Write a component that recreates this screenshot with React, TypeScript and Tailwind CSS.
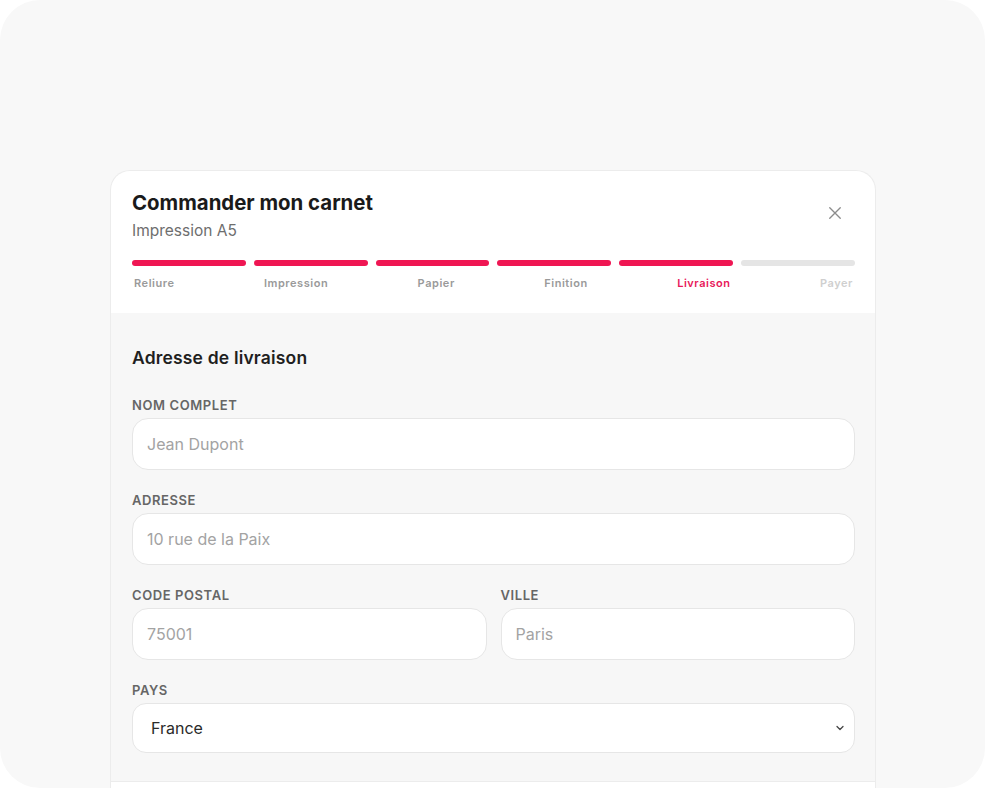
import React from 'react';

const steps = ['Reliure', 'Impression', 'Papier', 'Finition', 'Livraison', 'Payer'];
const current = 4;

function Field({ label, placeholder }: { label: string; placeholder: string }) {
  return (
    <div className="flex flex-col">
      <label className="text-[13px] leading-4 font-semibold tracking-[0.045em] text-[#666] mb-[5px]">{label}</label>
      <input
        placeholder={placeholder}
        className="h-[52px] w-full rounded-[16px] border border-[#e6e6e6] bg-white px-[14px] text-[16px] text-[#333] placeholder:text-[#a3a3a3] outline-none"
      />
    </div>
  );
}

export default function App() {
  return (
    <div className="h-[788px] w-[985px] bg-white overflow-hidden" style={{ fontFamily: 'Inter, "Noto Sans", sans-serif' }}>
      <div className="h-full w-full rounded-[40px] bg-[#f8f8f8] pt-[170px] pl-[110px]">
        <div className="w-[766px] rounded-t-[20px] border border-b-0 border-[#ececec] bg-white overflow-hidden">
          {/* Header */}
          <div className="pl-[21px] pr-[20px] pt-[18px] pb-[23px]">
            <div className="flex items-start justify-between">
              <div>
                <h1 className="text-[20.4px] leading-7 font-bold text-[#1a1a1a]">Commander mon carnet</h1>
                <p className="mt-[4px] text-[15.5px] leading-5 text-[#6e6e6e]">Impression A5</p>
              </div>
              <button className="mt-[15px] mr-[11px] text-[#8c8c8c]">
                <svg width="18" height="18" viewBox="0 0 24 24" fill="none" stroke="currentColor" strokeWidth="1.8" strokeLinecap="round">
                  <path d="M5 5l14 14M19 5L5 19" />
                </svg>
              </button>
            </div>
            <div className="mt-[19px] flex gap-2">
              {steps.map((s, i) => (
                <div key={s} className={`h-[6px] flex-1 rounded-full ${i <= current ? 'bg-[#ef1653]' : 'bg-[#e5e5e5]'}`} />
              ))}
            </div>
            <div className="mt-[10px] flex justify-between px-[2px]">
              {steps.map((s, i) => (
                <span
                  key={s}
                  className={`text-[11px] leading-[14px] font-semibold tracking-[0.05em] ${
                    i === current ? 'text-[#e8185a]' : i < current ? 'text-[#9a9a9a]' : 'text-[#cfcfcf]'
                  }`}
                >
                  {s}
                </span>
              ))}
            </div>
          </div>

          {/* Body */}
          <div className="bg-[#f7f7f7] pl-[21px] pr-[20px] pt-[33px] pb-[28px] border-b border-[#ececec]">
            <h2 className="text-[17.5px] leading-6 font-semibold text-[#1f1f1f] tracking-[0.01em]">Adresse de livraison</h2>
            <div className="mt-[27px] flex flex-col gap-[22px]">
              <Field label="NOM COMPLET" placeholder="Jean Dupont" />
              <Field label="ADRESSE" placeholder="10 rue de la Paix" />
              <div className="grid grid-cols-2 gap-[14px]">
                <Field label="CODE POSTAL" placeholder="75001" />
                <Field label="VILLE" placeholder="Paris" />
              </div>
              <div className="flex flex-col">
                <label className="text-[13px] leading-4 font-semibold tracking-[0.045em] text-[#666] mb-[5px]">PAYS</label>
                <div className="relative">
                  <select className="h-[50px] w-full appearance-none rounded-[14px] border border-[#e6e6e6] bg-white pl-[18px] text-[16px] text-[#2a2a2a] outline-none">
                    <option>France</option>
                  </select>
                  <svg className="pointer-events-none absolute right-[9px] top-1/2 -translate-y-1/2 text-[#444]" width="12" height="12" viewBox="0 0 24 24" fill="none" stroke="currentColor" strokeWidth="2.5" strokeLinecap="round" strokeLinejoin="round">
                    <path d="M6 9l6 6 6-6" />
                  </svg>
                </div>
              </div>
            </div>
          </div>
          <div className="h-[40px] bg-white" />
        </div>
      </div>
    </div>
  );
}
